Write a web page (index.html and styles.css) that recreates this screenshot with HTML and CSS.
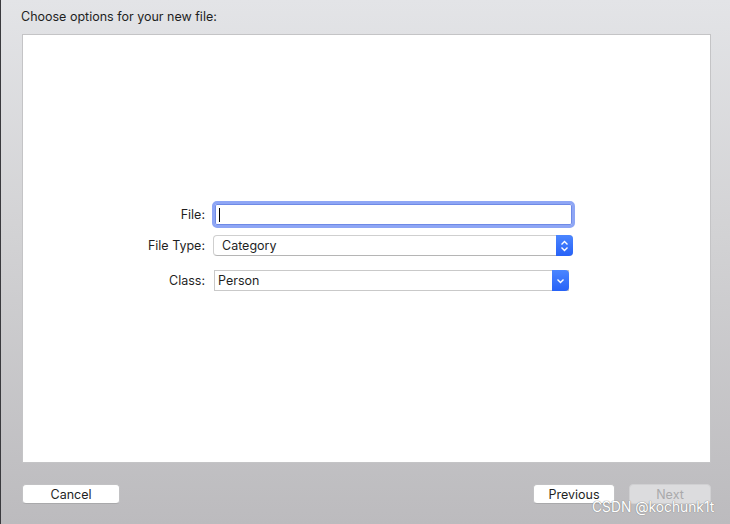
FILE: index.html
```html
<!DOCTYPE html>
<html>
<head>
    <title>Choose options for your new file</title>
    <link rel="stylesheet" href="styles.css">
</head>
<body>
    <div class="dialog">
        <div class="title">Choose options for your new file:</div>
        <div class="panel">
            <div class="form">
                <label class="row-file">File:</label>
                <div class="field row-file"><span class="caret"></span></div>

                <label class="row-type">File Type:</label>
                <div class="popup row-type">
                    <span class="value">Category</span>
                    <span class="arrows">
                        <svg width="9" height="12" viewBox="0 0 9 12"><path d="M1.5 4.5 L4.5 1.5 L7.5 4.5 M1.5 7.5 L4.5 10.5 L7.5 7.5" fill="none" stroke="#fff" stroke-width="1.4"/></svg>
                    </span>
                </div>

                <label class="row-class">Class:</label>
                <div class="combo row-class">
                    <span class="value">Person</span>
                    <span class="arrows">
                        <svg width="9" height="6" viewBox="0 0 9 6"><path d="M1.5 1.5 L4.5 4.5 L7.5 1.5" fill="none" stroke="#fff" stroke-width="1.4"/></svg>
                    </span>
                </div>
            </div>
        </div>
        <div class="buttons">
            <button class="btn cancel">Cancel</button>
            <div class="right">
                <button class="btn">Previous</button>
                <button class="btn disabled">Next</button>
            </div>
        </div>
        <div class="watermark">CSDN @kochunk1t</div>
    </div>
</body>
</html>
```

FILE: styles.css
```css
*, *::before, *::after { padding: 0; margin: 0; box-sizing: border-box; font-family: 'Inter', 'Liberation Sans', sans-serif; }
body { width: 730px; height: 524px; overflow: hidden; }
.dialog { position: relative; height: 524px; padding: 9px 19px 0 21px; background: linear-gradient(#e3e4e7, #d2d2d4 45%, #bcbbbe); border-left: 1px solid #3a3a3e; display: flex; flex-direction: column; }
.title { height: 25px; font-size: 12.5px; color: #1f1f1f; margin-left: -1px; }
.panel { height: 429px; background: #fff; border: 1px solid #c4c4c6; display: flex; justify-content: center; align-items: center; padding: 0 13px 5px 0; }

.form { display: grid; grid-template-columns: 60px 363px; column-gap: 7px; align-items: center; font-size: 12.5px; color: #1f1f1f; }
.form label { text-align: right; white-space: nowrap; }
.row-file { grid-row: 1; }
.row-type { grid-row: 2; margin-top: 7px; }
.row-class { grid-row: 3; margin-top: 14px; }

.field { height: 27px; border: 3px solid #8ea6f5; border-radius: 5px; background: #fff; box-shadow: inset 0 0 0 1px #6f8ae6; padding: 4px 0 0 4px; }
.caret { display: block; width: 1px; height: 14px; background: #000; }

.popup { height: 21px; border: 1px solid #cfcfcf; border-bottom-color: #b5b5b5; border-radius: 4px; display: flex; align-items: center; justify-content: space-between; background: #fff; margin-left: 1px; margin-right: 2px; }
.popup .value { padding-left: 8px; }
.popup .arrows { width: 17px; height: 21px; margin: -1px -1px -1px 0; background: linear-gradient(#4b86ff, #2762f7); border-radius: 0 4px 4px 0; display: flex; align-items: center; justify-content: center; }

.combo { height: 21px; border: 1px solid #c9c9c9; display: flex; align-items: center; justify-content: space-between; background: #fff; margin-left: 2px; margin-right: 6px; }
.combo .value { padding-left: 3px; }
.combo .arrows { width: 17px; height: 21px; margin: -1px -1px -1px 0; background: linear-gradient(#4b86ff, #2762f7); border-radius: 0 4px 4px 0; display: flex; align-items: center; justify-content: center; }

.buttons { display: flex; justify-content: space-between; margin-top: 21px; }
.right { display: flex; gap: 14px; }
.btn { height: 20px; background: #fff; border: 1px solid #c2c2c4; border-bottom-color: #a9a9ab; border-radius: 4px; font-size: 12.5px; color: #1f1f1f; }
.cancel { width: 98px; }
.right .btn { width: 82px; }
.btn.disabled { background: #dcdcde; border-color: #d0d0d2; color: #a9a9ab; }

.watermark { position: absolute; left: 591px; top: 499px; font-size: 13.8px; color: #fff; text-shadow: 0 0 1px #888, 0 0 1px #888; }
```
